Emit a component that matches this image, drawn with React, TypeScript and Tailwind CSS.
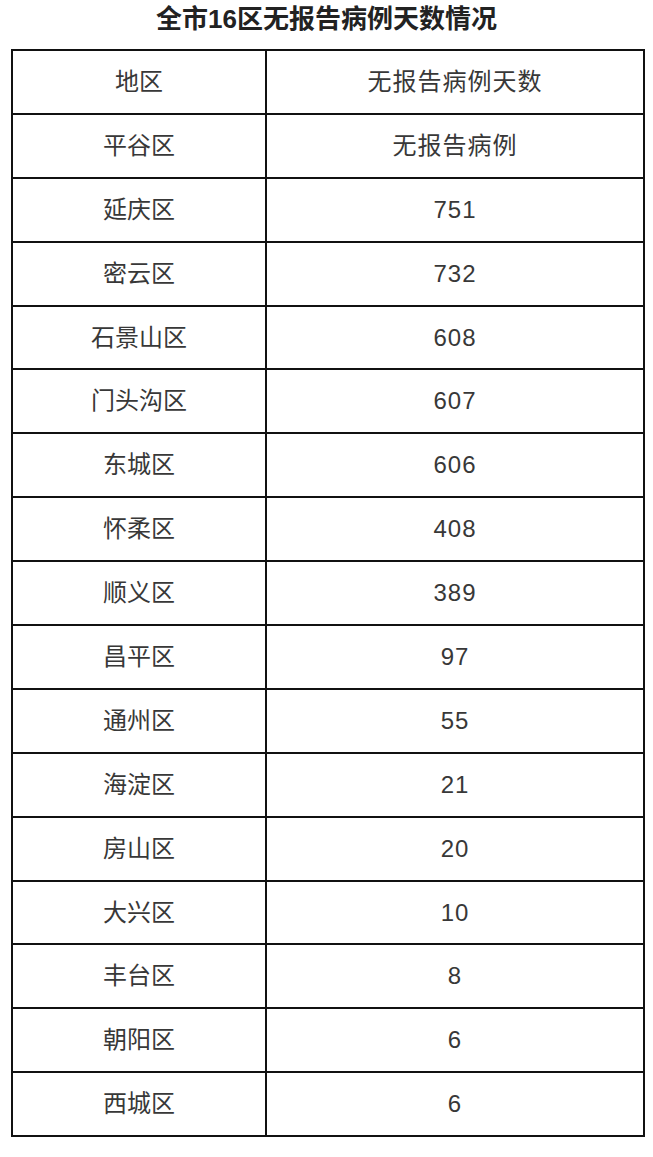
const rows: [string, string][] = [
  ["平谷区", "无报告病例"],
  ["延庆区", "751"],
  ["密云区", "732"],
  ["石景山区", "608"],
  ["门头沟区", "607"],
  ["东城区", "606"],
  ["怀柔区", "408"],
  ["顺义区", "389"],
  ["昌平区", "97"],
  ["通州区", "55"],
  ["海淀区", "21"],
  ["房山区", "20"],
  ["大兴区", "10"],
  ["丰台区", "8"],
  ["朝阳区", "6"],
  ["西城区", "6"],
];

export default function App() {
  return (
    <div
      className="w-[653px] h-[1157px] bg-white text-[#383838]"
      style={{ fontFamily: '"Liberation Sans", "Noto Sans CJK SC", sans-serif' }}
    >
      <h1 className="h-[49px] pt-[4px] text-center text-[26px] font-bold leading-[30px] text-[#222]">
        全市16区无报告病例天数情况
      </h1>
      <table className="ml-[11px] w-[634px] border-collapse border-2 border-[#111]">
        <tbody>
          <tr className="h-[63.9px]">
            <td className="w-[254px] border-2 border-[#111] text-center text-[24px]">地区</td>
            <td className="border-2 border-[#111] text-center text-[24px] tracking-[1px]">无报告病例天数</td>
          </tr>
          {rows.map(([area, days]) => (
            <tr key={area} className="h-[63.9px]">
              <td className="border-2 border-[#111] text-center text-[24px]">{area}</td>
              <td className="border-2 border-[#111] text-center text-[24px] tracking-[1px]">{days}</td>
            </tr>
          ))}
        </tbody>
      </table>
    </div>
  );
}
